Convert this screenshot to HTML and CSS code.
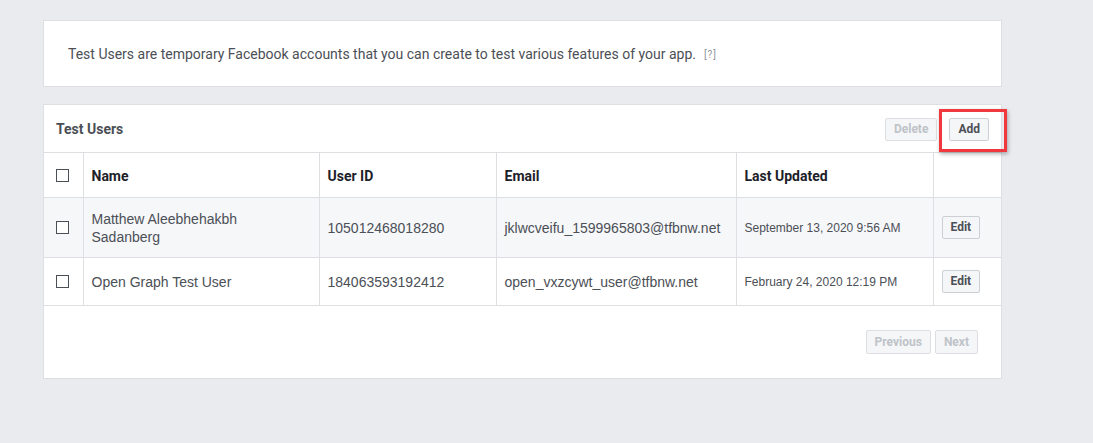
FILE: index.html
```html
<!DOCTYPE html>
<html>
<head>
<meta charset="utf-8">
<link rel="stylesheet" href="styles.css">
</head>
<body>
<div class="page">
  <div class="card intro">
    <span>Test Users are temporary Facebook accounts that you can create to test various features of your app.</span>
    <span class="help">[?]</span>
  </div>
  <div class="card users">
    <div class="users-head">
      <span class="title">Test Users</span>
      <div class="actions">
        <button class="btn disabled">Delete</button>
        <span class="highlight"><button class="btn">Add</button></span>
      </div>
    </div>
    <table class="grid">
      <colgroup>
        <col class="c-check"><col class="c-name"><col class="c-id"><col class="c-email"><col class="c-date"><col class="c-act">
      </colgroup>
      <thead>
        <tr>
          <th class="check"><span class="box"></span></th>
          <th>Name</th>
          <th>User ID</th>
          <th>Email</th>
          <th>Last Updated</th>
          <th></th>
        </tr>
      </thead>
      <tbody>
        <tr class="alt tall">
          <td class="check"><span class="box"></span></td>
          <td>Matthew Aleebhehakbh<br>Sadanberg</td>
          <td>105012468018280</td>
          <td>jklwcveifu_1599965803@tfbnw.net</td>
          <td class="date">September 13, 2020 9:56 AM</td>
          <td class="act"><button class="btn">Edit</button></td>
        </tr>
        <tr>
          <td class="check"><span class="box"></span></td>
          <td>Open Graph Test User</td>
          <td>184063593192412</td>
          <td>open_vxzcywt_user@tfbnw.net</td>
          <td class="date">February 24, 2020 12:19 PM</td>
          <td class="act"><button class="btn">Edit</button></td>
        </tr>
      </tbody>
    </table>
    <div class="pager">
      <button class="btn disabled">Previous</button>
      <button class="btn disabled">Next</button>
    </div>
  </div>
</div>
</body>
</html>
```

FILE: styles.css
```css
html, body {
  margin: 0;
  padding: 0;
  background: #e9ebee;
}
body {
  font-family: Roboto, "Liberation Sans", Arial, sans-serif;
  color: #4b4f56;
}
.page {
  padding: 20px 0 0 43px;
  width: 959px;
  display: flex;
  flex-direction: column;
  gap: 17px;
}
.card {
  background: #fff;
  border: 1px solid #dddfe2;
  box-sizing: border-box;
  width: 959px;
}
.intro {
  height: 67px;
  display: flex;
  align-items: center;
  padding: 0 24px;
  font-size: 14px;
  gap: 8px;
  padding-top: 1px;
}
.help {
  font-size: 10px;
  color: #90949c;
  letter-spacing: 1px;
}
.users-head {
  height: 47px;
  border-bottom: 1px solid #dddfe2;
  display: flex;
  align-items: center;
  justify-content: space-between;
  padding: 0 12px;
}
.title {
  font-weight: bold;
  font-size: 14px;
  color: #4b4f56;
}
.actions {
  display: flex;
  gap: 12px;
  align-items: center;
  margin-top: 1px;
}
.btn {
  font-family: Roboto, "Liberation Sans", Arial, sans-serif;
  font-weight: bold;
  font-size: 12px;
  color: #4b4f56;
  background: #f5f6f7;
  border: 1px solid #ccd0d5;
  border-radius: 2px;
  height: 23px;
  padding: 0 8px;
  line-height: 21px;
  margin: 0;
}
.btn.disabled {
  color: #bec3c9;
  border-color: #dddfe2;
}
.highlight {
  position: relative;
  display: inline-flex;
}
.highlight::after {
  content: "";
  position: absolute;
  left: -10px;
  top: -9px;
  right: -18px;
  bottom: -11px;
  border: 3px solid #f0393e;
  box-shadow: 1px 2px 4px rgba(0, 0, 0, 0.3);
  pointer-events: none;
}
.grid {
  width: 957px;
  border-collapse: collapse;
  table-layout: fixed;
}
.c-check { width: 39px; }
.c-name { width: 236px; }
.c-id { width: 177px; }
.c-email { width: 240px; }
.c-date { width: 197px; }
.c-act { width: 68px; }
.grid th, .grid td {
  border-right: 1px solid #dddfe2;
  border-bottom: 1px solid #dddfe2;
  padding: 0 8px;
  text-align: left;
  vertical-align: middle;
}
.grid th:last-child, .grid td:last-child {
  border-right: none;
}
.grid th {
  height: 43px;
  font-family: Roboto, "Liberation Sans", Arial, sans-serif;
  font-weight: bold;
  font-size: 14px;
  color: #1d2129;
  padding-top: 1px;
}
.grid td {
  height: 47px;
  font-family: "Liberation Sans", Arial, sans-serif;
  font-size: 14px;
  color: #4b4f56;
  line-height: 18px;
}
.grid tr.tall td {
  height: 59px;
}
.grid tr.alt td {
  background: #f6f7f9;
}
.grid td.date {
  font-size: 12px;
}
.grid .check {
  padding: 0 0 0 12px;
}
.box {
  display: block;
  width: 11px;
  height: 11px;
  border: 1px solid #4b4f56;
  background: #fff;
}
.pager {
  display: flex;
  justify-content: flex-end;
  gap: 4px;
  padding: 24px 23px 24px 0;
}
.pager .btn {
  height: 24px;
  line-height: 22px;
}
```
